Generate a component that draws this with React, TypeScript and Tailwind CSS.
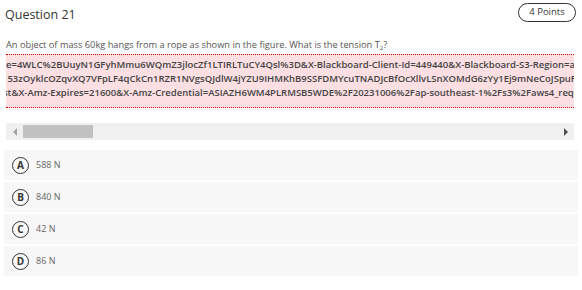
import React from "react";

const lines = [
  { text: "e=4WLC%2BUuyN1GFyhMmu6WQmZ3jlocZf1LTIRLTuCY4Qsl%3D&X-Blackboard-Client-Id=449440&X-Blackboard-S3-Region=ap-southeast-1", ml: "ml-0" },
  { text: "153zOyklcOZqvXQ7VFpLF4qCkCn1RZR1NVgsQJdlW4jYZU9IHMKhB9SSFDMYcuTNADJcBfOcXllvLSnXOMdG6zYy1Ej9mNeCoJSpuFvR", ml: "-ml-[4px]" },
  { text: "st&X-Amz-Expires=21600&X-Amz-Credential=ASIAZH6WM4PLRMSB5WDE%2F20231006%2Fap-southeast-1%2Fs3%2Faws4_request", ml: "-ml-[3px]" },
];

const options = [
  { l: "A", t: "588 N" },
  { l: "B", t: "840 N" },
  { l: "C", t: "42 N" },
  { l: "D", t: "86 N" },
];

export default function App() {
  return (
    <div
      className="w-[582px] h-[290px] bg-white overflow-hidden"
      style={{ fontFamily: '"Open Sans", "Liberation Sans", sans-serif' }}
    >
      <div className="flex items-start justify-between pl-[5px] pr-[6px] pt-[3px] h-[38px]">
        <div className="text-[12.5px] leading-[20px] pt-[2px] text-[#333]">Question 21</div>
        <div className="h-[19px] w-[58px] rounded-full border border-[#333] flex items-center justify-center text-[9.5px] text-[#333]">
          4 Points
        </div>
      </div>
      <div className="px-[6px] text-[9.25px] leading-[14px] text-[#555]">
        An object of mass 60kg hangs from a rope as shown in the figure. What is the tension T
        <sub className="text-[6px]">2</sub>?
      </div>
      <div className="mx-[6px] mt-[2px] w-[568px] overflow-hidden border-y border-dotted border-[#d40000] bg-[#fbdfe2] pt-[3px] pb-[7px]">
        {lines.map((ln, i) => (
          <div
            key={i}
            className={`${ln.ml} whitespace-nowrap text-[9.5px] leading-[14px] font-semibold text-[#444]`}
          >
            {ln.text}
          </div>
        ))}
      </div>
      <div className="mx-[6px] mt-[15px] w-[568px] h-[17px] bg-[#f0f0f0] flex items-center">
        <div className="w-[17px] flex items-center justify-center">
          <div className="w-0 h-0 border-y-[4px] border-y-transparent border-r-[4px] border-r-[#a3a3a3]" />
        </div>
        <div className="w-[70px] h-[13px] bg-[#c1c1c1]" />
        <div className="flex-1" />
        <div className="w-[17px] flex items-center justify-center">
          <div className="w-0 h-0 border-y-[4px] border-y-transparent border-l-[4px] border-l-[#505050]" />
        </div>
      </div>
      <div className="mx-[4px] mt-[10px] flex flex-col gap-[2px]">
        {options.map((o) => (
          <div key={o.l} className="h-[30px] bg-[#f7f7f7] flex items-center pl-[8px]">
            <div className="w-[17px] h-[17px] rounded-full border-[1.5px] border-[#333] flex items-center justify-center text-[10px] font-bold text-[#333]">
              {o.l}
            </div>
            <div className="ml-[7px] text-[9px] text-[#666]">{o.t}</div>
          </div>
        ))}
      </div>
    </div>
  );
}
